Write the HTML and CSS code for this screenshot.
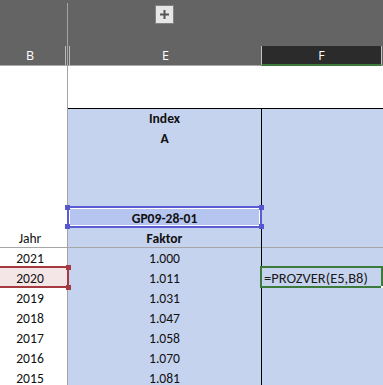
FILE: index.html
```html
<!DOCTYPE html>
<html lang="de">
<head>
  <meta charset="UTF-8" />
  <title>Mappe1 - Excel</title>
  <link rel="stylesheet" href="styles.css">
</head>
<body>
  <div class="sheet">
    <div class="group-bar">
      <span class="group-btn">
        <svg width="9" height="9" viewBox="0 0 9 9"><path d="M0 3.5h9v2H0zM3.5 0h2v9h-2z" fill="#555"/></svg>
      </span>
    </div>

    <div class="col-heads">
      <div class="ch ch-b">B</div>
      <div class="ch ch-gap"></div>
      <div class="ch ch-e">E</div>
      <div class="ch ch-f">F</div>
      <div class="ch ch-rest"></div>
    </div>

    <div class="top-blank"></div>

    <div class="row first">
      <div class="cell cb"></div>
      <div class="cell ce bold">Index</div>
      <div class="cell cf"></div>
    </div>
    <div class="row">
      <div class="cell cb"></div>
      <div class="cell ce bold">A</div>
      <div class="cell cf"></div>
    </div>
    <div class="row">
      <div class="cell cb"></div>
      <div class="cell ce"></div>
      <div class="cell cf"></div>
    </div>
    <div class="row">
      <div class="cell cb"></div>
      <div class="cell ce"></div>
      <div class="cell cf"></div>
    </div>
    <div class="row">
      <div class="cell cb"></div>
      <div class="cell ce"></div>
      <div class="cell cf"></div>
    </div>
    <div class="row">
      <div class="cell cb"></div>
      <div class="cell ce bold ref">
        GP09-28-01
        <span class="ref-box"></span>
        <span class="knob knob-blue tl"></span>
        <span class="knob knob-blue tr"></span>
        <span class="knob knob-blue bl"></span>
        <span class="knob knob-blue br"></span>
      </div>
      <div class="cell cf"></div>
    </div>
    <div class="row">
      <div class="cell cb">Jahr</div>
      <div class="cell ce bold">Faktor</div>
      <div class="cell cf"></div>
    </div>

    <div class="row ruled">
      <div class="cell cb">2021</div>
      <div class="cell ce">1.000</div>
      <div class="cell cf"></div>
    </div>
    <div class="row">
      <div class="cell cb picked">
        2020
        <span class="pick-box"></span>
        <span class="knob knob-red rt"></span>
        <span class="knob knob-red rb"></span>
      </div>
      <div class="cell ce">1.011</div>
      <div class="cell cf editing">
        =PROZVER(E5,B8)
        <span class="edit-box"></span>
        <span class="fill-dot"></span>
      </div>
    </div>
    <div class="row">
      <div class="cell cb">2019</div>
      <div class="cell ce">1.031</div>
      <div class="cell cf"></div>
    </div>
    <div class="row">
      <div class="cell cb">2018</div>
      <div class="cell ce">1.047</div>
      <div class="cell cf"></div>
    </div>
    <div class="row">
      <div class="cell cb">2017</div>
      <div class="cell ce">1.058</div>
      <div class="cell cf"></div>
    </div>
    <div class="row">
      <div class="cell cb">2016</div>
      <div class="cell ce">1.070</div>
      <div class="cell cf"></div>
    </div>
    <div class="row">
      <div class="cell cb">2015</div>
      <div class="cell ce">1.081</div>
      <div class="cell cf"></div>
    </div>

    <div class="freeze-line"></div>
  </div>
</body>
</html>
```

FILE: styles.css
```css
body {
  margin: 0;
  background: #ffffff;
  font-family: Calibri, Carlito, "Liberation Sans", Arial, sans-serif;
}
.sheet {
  position: relative;
  width: 383px;
  height: 385px;
  overflow: hidden;
  background: #ffffff;
}

/* outline bar with the group button */
.group-bar {
  height: 46px;
  box-sizing: border-box;
  padding: 5px 0 0 155px;
  background: #646464;
}
.group-btn {
  display: flex;
  align-items: center;
  justify-content: center;
  width: 19px;
  height: 19px;
  box-sizing: border-box;
  border: 1px solid #828282;
  background: #e6e6e6;
}

/* column letters */
.col-heads {
  display: flex;
  height: 20px;
  background: #646464;
  font-family: "Open Sans", "Noto Sans", sans-serif;
  font-size: 12.5px;
  color: #ffffff;
}
.ch {
  display: flex;
  align-items: center;
  justify-content: center;
  box-sizing: border-box;
  border-bottom: 1px solid #a9a9a9;
}
.ch-b {
  width: 66px;
  padding-right: 5px;
  border-right: 1px solid #b9b9b9;
}
.ch-gap {
  width: 3px;
}
.ch-e {
  width: 192px;
  border-left: 1px solid #b9b9b9;
}
.ch-f {
  width: 121px;
  background: #2b2b2b;
  border-left: 1px solid #c4c4c4;
  border-right: 1px solid #c4c4c4;
  border-bottom: 2px solid #3d7b3d;
}
.ch-rest {
  flex: 1;
}

.top-blank {
  height: 42px;
}

/* grid rows */
.row {
  display: flex;
  height: 20px;
  font-size: 13.6px;
  line-height: 17px;
  color: #111111;
}
.row.first {
  height: 19px;
}
.cell {
  position: relative;
  display: flex;
  align-items: flex-end;
  justify-content: center;
  box-sizing: border-box;
  white-space: nowrap;
}
.cb {
  width: 68px;
  padding-right: 8px;
}
.ce {
  width: 194px;
  border-right: 1px solid #000000;
  background: #c5d3ef;
}
.cf {
  flex: 1;
  justify-content: flex-start;
  padding-left: 2px;
  background: #c5d3ef;
}
.bold {
  font-weight: 700;
}
.first .ce,
.first .cf {
  box-shadow: inset 0 1px 0 #000000;
}
.ruled .cell {
  box-shadow: inset 0 1px 0 #a6a6a6;
}

/* range reference GP09-28-01 */
.ce.ref {
  background: #b6c5ef;
}
.ref-box {
  position: absolute;
  left: -1px;
  right: -1px;
  top: -1px;
  bottom: -1px;
  border: 2px solid #5b5bd4;
  box-shadow: inset 0 0 0 1px #ffffff;
  z-index: 3;
}
.knob {
  position: absolute;
  width: 5px;
  height: 5px;
  z-index: 4;
}
.knob-blue {
  background: #5656d0;
}
.knob-blue.tl { left: -3px; top: -2px; }
.knob-blue.tr { left: 191px; top: -2px; }
.knob-blue.bl { left: -3px; top: 17px; }
.knob-blue.br { left: 191px; top: 17px; }

/* range reference B8 */
.cb.picked {
  background: #f4e5e7;
}
.pick-box {
  position: absolute;
  left: -3px;
  right: -1px;
  top: -1px;
  bottom: -1px;
  border: 2px solid #a53a40;
  z-index: 3;
}
.knob-red {
  background: #a53a40;
}
.knob-red.rt { left: 66px; top: -2px; }
.knob-red.rb { left: 66px; top: 18px; }

/* cell in edit mode */
.cf.editing {
  font-size: 14.5px;
  color: #1a1a1a;
}
.edit-box {
  position: absolute;
  left: -2px;
  right: 0;
  top: -1px;
  bottom: -1px;
  border: 2px solid #3d7b3d;
  z-index: 3;
}
.fill-dot {
  position: absolute;
  right: 0;
  bottom: -1px;
  width: 2px;
  height: 2px;
  background: #ffffff;
  z-index: 4;
}

.freeze-line {
  position: absolute;
  left: 67px;
  top: 3px;
  bottom: 0;
  width: 1px;
  background: #a3a3a3;
  z-index: 2;
}
```
